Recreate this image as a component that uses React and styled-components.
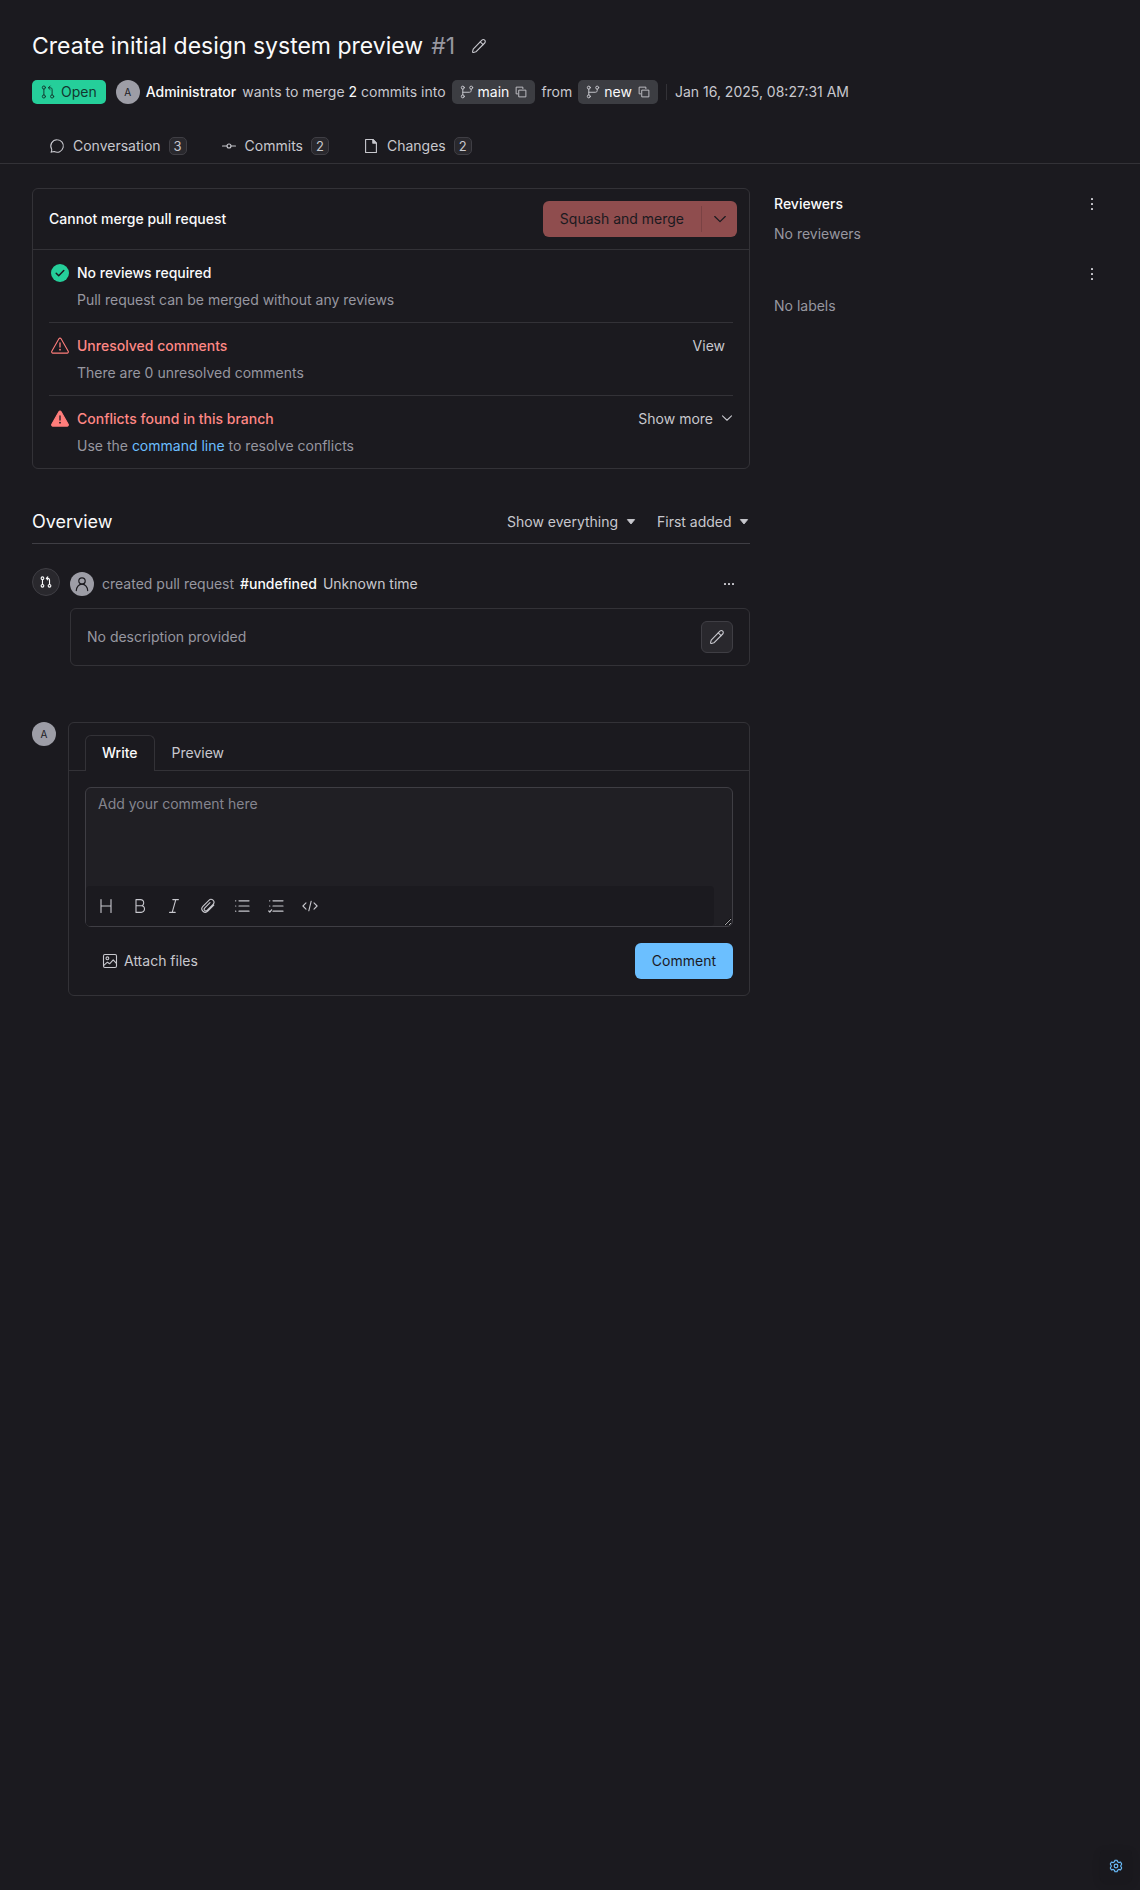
import React, { useState } from "react";
import styled, { createGlobalStyle, css } from "styled-components";

const c = {
  bg: "#1b1a1f",
  raised: "#201f24",
  control: "#29282d",
  chip: "#3c3d42",
  border: "#333237",
  borderStrong: "#3f3e44",
  text1: "#fafafb",
  text2: "#c8c8ce",
  text3: "#9797a0",
  muted: "#85858f",
  green: "#25cf9a",
  red: "#ff8885",
  redFill: "#ff7d7b",
  blue: "#6bbfff",
  avatar: "#9d9da6",
};

const GlobalStyle = createGlobalStyle`
  *, *::before, *::after { box-sizing: border-box; }
  body {
    margin: 0;
    background: ${c.bg};
    color: ${c.text2};
    font-family: Inter, "Liberation Sans", sans-serif;
    font-size: 14px;
    line-height: 20px;
  }
  h1, h2, h3, p { margin: 0; font-size: inherit; font-weight: inherit; }
  button, select, textarea { font: inherit; color: inherit; }
`;

/* ---------- icons ---------- */

const Svg = ({ size = 14, children, width, ...rest }) => (
  <svg
    width={size}
    height={size}
    viewBox="0 0 16 16"
    fill="none"
    stroke="currentColor"
    strokeWidth={width || 1.1}
    strokeLinecap="round"
    strokeLinejoin="round"
    aria-hidden="true"
    {...rest}
  >
    {children}
  </svg>
);

const PencilIcon = ({ size = 16 }) => (
  <Svg size={size}>
    <path d="M2.2 11.1 10.9 2.200a1.900 1.900 0 0 1 2.800 2.800L4.900 13.800l-2.400.7c-.6.1-1-.3-.9-.9z" />
    <path d="m9.300 3.900 2.800 2.800" />
  </Svg>
);
const PullRequestIcon = ({ size, width }) => (
  <Svg size={size} width={width}>
    <circle cx="3.3" cy="2.9" r="1.8" />
    <circle cx="3.3" cy="13.1" r="1.8" />
    <circle cx="12.7" cy="13.1" r="1.8" />
    <path d="M3.3 4.7v6.6M12.7 11.3V5.2c0-1.3-.7-2-2-2H8.6M10.4 1.2l-2 2 2 2" />
  </Svg>
);
const BranchIcon = () => (
  <Svg size={14}>
    <circle cx="3.2" cy="3" r="1.7" />
    <circle cx="3.2" cy="13" r="1.7" />
    <circle cx="12.8" cy="3" r="1.7" />
    <path d="M3.2 4.7v6.6M12.8 4.7v1.6c0 1.2-.8 2-2 2H3.2" />
  </Svg>
);
const CopyIcon = () => (
  <Svg size={12} width={1.2}>
    <path d="M5.5 5.5h9v9h-9zM3.5 10.5h-2v-9h9v2" />
  </Svg>
);
const BubbleIcon = () => (
  <Svg size={16}>
    <path d="M8.200 1.800a6.200 6.200 0 1 1-2.900 11.700c-.8-.2-1.900.6-3.200.7.5-1 .9-1.900.6-3A6.200 6.200 0 0 1 8.200 1.800z" />
  </Svg>
);
const CommitIcon = () => (
  <Svg size={16}>
    <circle cx="8" cy="8" r="2" />
    <path d="M1.5 8H6M10 8h4.5" />
  </Svg>
);
const FileIcon = () => (
  <Svg size={16}>
    <path d="M2.6 1.5h7.2l3.6 3.6v9.4H2.6z" />
    <path d="M9.8 1.5v3.6h3.6z" fill="currentColor" />
  </Svg>
);
const CheckCircleIcon = () => (
  <svg width="18" height="18" viewBox="0 0 18 18" aria-hidden="true">
    <circle cx="9" cy="9" r="9" fill={c.green} />
    <path d="m5.200 9.300 2.500 2.400L12.800 6.500" fill="none" stroke={c.bg} strokeWidth="1.5" strokeLinecap="round" strokeLinejoin="round" />
  </svg>
);
const WarningIcon = ({ solid }) => (
  <svg width="18" height="18" viewBox="0 0 18 18" fill="none" aria-hidden="true">
    <path
      d="M7.9 1.7a1.3 1.3 0 0 1 2.2 0l7.1 12.5a1.3 1.3 0 0 1-1.1 1.9H1.9a1.3 1.3 0 0 1-1.1-1.9z"
      fill={solid ? c.redFill : "none"}
      stroke={c.redFill}
      strokeWidth="1.1"
    />
    <path d="M9 6v4" stroke={solid ? c.bg : c.redFill} strokeWidth="1.3" strokeLinecap="round" />
    <circle cx="9" cy="12.7" r="0.9" fill={solid ? c.bg : c.redFill} />
  </svg>
);
const ChevronIcon = ({ size }) => (
  <Svg size={size} width={1.4}>
    <path d="M2 5.2 8 11l6-5.800" />
  </Svg>
);
const CaretIcon = () => (
  <svg width="10" height="6" viewBox="0 0 10 6" aria-hidden="true">
    <path d="M1.4.6h7.2L5 4.9z" fill="currentColor" stroke="currentColor" strokeLinejoin="round" />
  </svg>
);
const DotsIcon = ({ vertical }) => (
  <svg width="16" height="16" viewBox="0 0 16 16" fill="currentColor" aria-hidden="true">
    {vertical
      ? [3, 8, 13].map((y) => <rect key={y} x="7" y={y - 1} width="2" height="2" rx="0.5" />)
      : [4, 8, 12].map((x) => <rect key={x} x={x - 1} y="7" width="2" height="2" rx="0.5" />)}
  </svg>
);
const UserIcon = () => (
  <Svg size={16} width={1.2}>
    <circle cx="8" cy="5" r="3.2" />
    <path d="M2.3 14.6c0-3.6 2.5-6.4 5.7-6.4s5.7 2.8 5.7 6.4" />
  </Svg>
);
const HeaderIcon = () => <Svg size={16}><path d="M3 1.6v12.8M13 1.6v12.8M3 8h10" /></Svg>;
const BoldIcon = () => <Svg size={16}><path d="M4 1.6h4.6a3.1 3.1 0 0 1 0 6.2H4zM4 7.8h5.2a3.3 3.3 0 0 1 0 6.6H4z" /></Svg>;
const ItalicIcon = () => <Svg size={16}><path d="M6.8 1.6h5.6M3.6 14.4h5.6M9.8 1.6 6.2 14.4" /></Svg>;
const ClipIcon = () => (
  <Svg size={16}>
    <path d="m13.800 7.200-6 6a3.400 3.400 0 0 1-4.900-4.800l6-6.100a2.900 2.900 0 0 1 4.200 4l-6 6.100a1.700 1.700 0 0 1-2.500-2.300l5.400-5.500" />
  </Svg>
);
const ListIcon = () => (
  <Svg size={16}><path d="M5 2.8h10M5 8h10M5 13.2h10M1.6 2.8h.2M1.6 8h.2M1.6 13.2h.2" strokeWidth="1.2" /></Svg>
);
const ChecklistIcon = () => (
  <Svg size={16}><path d="M5 2.8h10M5 8h10M5 13.2h10M1.6 2.8h.2M1.6 8h.2M.8 13l1 1 1.8-2.2" strokeWidth="1.2" /></Svg>
);
const CodeIcon = () => <Svg size={16}><path d="M4 4.8.9 8 4 11.2M12 4.8 15.1 8 12 11.2M9.2 3.2 6.8 12.8" /></Svg>;
const ImageIcon = () => (
  <Svg size={16}>
    <rect x="1.5" y="1.5" width="13" height="13" rx="1.4" />
    <circle cx="5.4" cy="5.3" r="1.4" />
    <path d="m1.8 12.4 3.6-3.2 2.2 1.6 3.6-4 3.2 3.6" />
  </Svg>
);
const GearIcon = () => (
  <Svg size={14} width={1.3}>
    <path d="M6.8 1.4h2.4l.5 1.8 1.5.9 2-.6 1.3 2.3L13.3 8l1.2 2.2-1.3 2.3-2-.6-1.5.9-.5 1.8H6.8l-.5-1.8-1.5-.9-2 .6-1.3-2.3L2.7 8 1.5 5.8l1.3-2.3 2 .6 1.5-.9z" />
    <circle cx="8" cy="8" r="2.1" />
  </Svg>
);

/* ---------- shared parts ---------- */

const PlainButton = styled.button`
  display: inline-flex;
  align-items: center;
  justify-content: center;
  gap: 8px;
  padding: 0;
  border: 0;
  background: none;
  color: ${c.text2};
  cursor: pointer;
`;

const IconButton = styled(PlainButton)`
  width: ${(p) => p.$size || 24}px;
  height: ${(p) => p.$size || 24}px;
  flex: none;
  ${(p) =>
    p.$outlined &&
    css`
      background: ${c.control};
      border: 1px solid ${c.borderStrong};
      border-radius: 6px;
    `}
`;

const Avatar = styled.span`
  display: flex;
  align-items: center;
  justify-content: center;
  flex: none;
  width: 24px;
  height: 24px;
  border-radius: 50%;
  background: ${c.avatar};
  color: ${c.bg};
  font-size: 10px;
`;

const Strong = styled.strong`
  color: ${c.text1};
  font-weight: ${(p) => p.$weight || 500};
`;

const Card = styled.section`
  border: 1px solid ${c.border};
  border-radius: 6px;
`;

/* ---------- page ---------- */

const Page = styled.div`
  padding-top: 30px;
`;

const Header = styled.header`
  display: flex;
  flex-direction: column;
  gap: 18px;
  padding: 0 32px;
`;

const TitleRow = styled.div`
  display: flex;
  align-items: center;
  gap: 8px;
`;

const Title = styled.h1`
  color: ${c.text1};
  font-size: 23px;
  line-height: 32px;
  font-weight: 400;
`;

const TitleNumber = styled.span`
  color: ${c.text3};
  font-size: 23px;
  line-height: 32px;
`;

const Meta = styled.div`
  display: flex;
  align-items: center;
  flex-wrap: wrap;
  gap: 6px;
`;

const StateBadge = styled.span`
  display: inline-flex;
  align-items: center;
  gap: 6px;
  height: 24px;
  margin-right: 4px;
  padding: 0 9px;
  border-radius: 5px;
  background: ${c.green};
  color: #12382f;
`;

const BranchChip = styled.span`
  display: inline-flex;
  align-items: center;
  gap: 4px;
  height: 24px;
  padding: 0 8px;
  border-radius: 5px;
  background: ${c.chip};
`;

const BranchLink = styled.a`
  display: inline-flex;
  align-items: center;
  gap: 4px;
  color: ${c.text1};
  text-decoration: none;
  svg { color: ${c.text2}; }
`;

const CopyButton = styled(PlainButton)`
  width: 12px;
  height: 14px;
  margin-left: 2px;
`;

const Divider = styled.span`
  width: 1px;
  height: 16px;
  margin: 0 2px;
  background: ${c.border};
`;

const Tabs = styled.nav`
  display: flex;
  margin-top: 24px;
  padding: 0 32px;
  border-bottom: 1px solid ${c.border};
`;

const Tab = styled.a`
  display: flex;
  align-items: center;
  gap: 8px;
  height: 35px;
  padding: 0 17px;
  color: ${c.text2};
  text-decoration: none;
`;

const Count = styled.span`
  min-width: 18px;
  height: 18px;
  border: 1px solid ${c.borderStrong};
  border-radius: 5px;
  background: ${c.control};
  font-size: 13px;
  line-height: 16px;
  text-align: center;
`;

const Columns = styled.div`
  display: grid;
  grid-template-columns: minmax(0, 1fr) 334px;
  gap: 24px;
  padding: 24px 32px;
`;

/* ---------- merge panel ---------- */

const MergeHeader = styled.div`
  display: flex;
  align-items: center;
  justify-content: space-between;
  padding: 12px 12px 12px 16px;
  border-bottom: 1px solid ${c.border};
`;

const SplitButton = styled.div`
  display: flex;
  align-items: center;
  height: 36px;
  border-radius: 6px;
  background: #8f4d4e;
  button {
    height: 36px;
    color: ${c.bg};
  }
`;

const SplitMain = styled(PlainButton)`
  padding: 0 17px;
`;

const SplitMenu = styled(PlainButton)`
  width: 35px;
`;

const SplitRule = styled.span`
  width: 1px;
  height: 26px;
  background: #7a4244;
`;

const Checks = styled.ul`
  margin: 0;
  padding: 0 16px;
  list-style: none;
`;

const Check = styled.li`
  display: grid;
  grid-template-columns: 18px 1fr auto;
  align-items: center;
  gap: 6px 8px;
  padding: 12px 0 12px 2px;
  line-height: 21px;
  & + & { border-top: 1px solid ${c.border}; }
`;

const CheckTitle = styled.h3`
  color: ${(p) => (p.$tone === "danger" ? c.red : c.text1)};
  font-weight: 500;
`;

const CheckText = styled.p`
  grid-column: 2 / -1;
  color: ${c.text3};
`;

const TextLink = styled.a`
  color: ${c.blue};
  text-decoration: none;
`;

const CheckAction = styled(PlainButton)`
  align-self: start;
  height: 20px;
  padding: 0 ${(p) => (p.$icon ? 0 : 8)}px 0 0;
`;

/* ---------- overview ---------- */

const Overview = styled.div`
  display: flex;
  align-items: center;
  justify-content: space-between;
  margin-top: 40px;
  padding-bottom: 8px;
  border-bottom: 1px solid ${c.borderStrong};
`;

const OverviewTitle = styled.h2`
  color: ${c.text1};
  font-size: 18px;
  line-height: 26px;
  font-weight: 400;
`;

const Filters = styled.div`
  display: flex;
  gap: 20px;
`;

const SelectWrap = styled.label`
  display: grid;
  align-items: center;
  & > * { grid-area: 1 / 1; }
  svg { justify-self: end; pointer-events: none; margin-right: 1px; }
`;

const Select = styled.select`
  appearance: none;
  padding: 0 18px 0 0;
  border: 0;
  background: ${c.bg};
  cursor: pointer;
`;

const Event = styled.article`
  display: grid;
  grid-template-columns: 28px minmax(0, 1fr);
  gap: 10px;
  margin-top: 24px;
`;

const EventMarker = styled.span`
  display: flex;
  align-items: center;
  justify-content: center;
  width: 28px;
  height: 28px;
  border: 1px solid ${c.borderStrong};
  border-radius: 50%;
  background: ${c.control};
  color: ${c.text1};
`;

const EventLine = styled.div`
  display: flex;
  align-items: center;
  gap: 6px;
  padding: 4px 9px 12px 0;
  span + p { margin-left: 2px; }
`;

const EventAction = styled.p`
  color: ${c.text3};
`;

const Spacer = styled.span`
  flex: 1;
`;

const Description = styled(Card)`
  display: flex;
  align-items: center;
  justify-content: space-between;
  padding: 12px 16px;
  color: ${c.text3};
`;

/* ---------- comment form ---------- */

const Composer = styled.div`
  display: grid;
  grid-template-columns: 24px minmax(0, 1fr);
  gap: 12px;
  margin-top: 56px;
`;

const ComposerTabs = styled.div`
  display: flex;
  padding: 12px 16px 0;
  border-bottom: 1px solid ${c.border};
`;

const ComposerTab = styled(PlainButton)`
  height: 36px;
  margin-bottom: -1px;
  padding: 0 16px 2px;
  border: 1px solid transparent;
  border-bottom: 0;
  border-radius: 6px 6px 0 0;
  ${(p) =>
    p.$active &&
    css`
      border-color: ${c.border};
      background: ${c.bg};
      color: ${c.text1};
      font-weight: 500;
    `}
`;

const ComposerBody = styled.form`
  padding: 16px;
`;

const Editor = styled.div`
  position: relative;
  display: flex;
`;

const Textarea = styled.textarea`
  width: 100%;
  height: 140px;
  min-height: 140px;
  padding: 6px 12px 44px;
  border: 1px solid ${c.borderStrong};
  border-radius: 6px;
  background: ${c.raised};
  resize: vertical;
  outline: none;
  color-scheme: dark;
  &::placeholder { color: ${c.muted}; }
`;

const Toolbar = styled.div`
  position: absolute;
  left: 1px;
  right: 19px;
  bottom: 1px;
  display: flex;
  align-items: center;
  gap: 10px;
  height: 40px;
  padding: 0 8px;
  border-radius: 4px;
  background: ${c.bg};
`;

const ComposerFooter = styled.div`
  display: flex;
  align-items: center;
  justify-content: space-between;
  margin-top: 16px;
`;

const AttachButton = styled(PlainButton)`
  gap: 6px;
  height: 36px;
  padding: 0 17px;
`;

const SubmitButton = styled(PlainButton)`
  height: 36px;
  padding: 0 17px;
  border-radius: 6px;
  background: ${c.blue};
  color: ${c.bg};
`;

/* ---------- aside ---------- */

const Aside = styled.aside`
  display: flex;
  flex-direction: column;
  gap: 18px;
  padding-top: 4px;
`;

const AsideGroup = styled.section`
  display: flex;
  flex-direction: column;
  gap: ${(p) => p.$gap}px;
  color: ${c.text3};
`;

const AsideHead = styled.div`
  display: flex;
  align-items: center;
  justify-content: space-between;
  padding-right: 4px;
`;

const SettingsButton = styled(IconButton)`
  position: fixed;
  right: 8px;
  bottom: 8px;
  border-radius: 4px;
  background: #19181d;
  color: ${c.blue};
  box-shadow: 0 2px 8px rgba(0, 0, 0, 0.1);
`;

const pageTabs = [
  { label: "Conversation", count: 3, Icon: BubbleIcon },
  { label: "Commits", count: 2, Icon: CommitIcon },
  { label: "Changes", count: 2, Icon: FileIcon },
];

const tools = [
  ["Heading", HeaderIcon],
  ["Bold", BoldIcon],
  ["Italic", ItalicIcon],
  ["Attachment", ClipIcon],
  ["List", ListIcon],
  ["Checklist", ChecklistIcon],
  ["Code", CodeIcon],
];

const Branch = ({ name }) => (
  <BranchChip>
    <BranchLink href={`#${name}`}>
      <BranchIcon />
      {name}
    </BranchLink>
    <CopyButton type="button" aria-label={`Copy ${name}`}>
      <CopyIcon />
    </CopyButton>
  </BranchChip>
);

const Filter = ({ label, options }) => (
  <SelectWrap>
    <Select aria-label={label}>
      {options.map((o) => (
        <option key={o}>{o}</option>
      ))}
    </Select>
    <CaretIcon />
  </SelectWrap>
);

export default function App() {
  const [mode, setMode] = useState("Write");

  return (
    <Page>
      <GlobalStyle />
      <Header>
        <TitleRow>
          <Title>Create initial design system preview</Title>
          <TitleNumber>#1</TitleNumber>
          <IconButton type="button" $size={32} aria-label="Edit title">
            <PencilIcon />
          </IconButton>
        </TitleRow>
        <Meta>
          <StateBadge>
            <PullRequestIcon size={14} />
            Open
          </StateBadge>
          <Avatar>A</Avatar>
          <Strong>Administrator</Strong>
          <span>
            wants to merge <Strong $weight={400}>2</Strong> commits into
          </span>
          <Branch name="main" />
          <span>from</span>
          <Branch name="new" />
          <Divider />
          <time>Jan 16, 2025, 08:27:31 AM</time>
        </Meta>
      </Header>

      <Tabs>
        {pageTabs.map(({ label, count, Icon }) => (
          <Tab key={label} href={`#${label.toLowerCase()}`}>
            <Icon />
            {label}
            <Count>{count}</Count>
          </Tab>
        ))}
      </Tabs>

      <Columns>
        <main>
          <Card>
            <MergeHeader>
              <Strong>Cannot merge pull request</Strong>
              <SplitButton>
                <SplitMain type="button">Squash and merge</SplitMain>
                <SplitRule />
                <SplitMenu type="button" aria-label="Merge options">
                  <ChevronIcon size={14} />
                </SplitMenu>
              </SplitButton>
            </MergeHeader>
            <Checks>
              <Check>
                <CheckCircleIcon />
                <CheckTitle>No reviews required</CheckTitle>
                <CheckText>Pull request can be merged without any reviews</CheckText>
              </Check>
              <Check>
                <WarningIcon />
                <CheckTitle $tone="danger">Unresolved comments</CheckTitle>
                <CheckAction type="button">View</CheckAction>
                <CheckText>There are 0 unresolved comments</CheckText>
              </Check>
              <Check>
                <WarningIcon solid />
                <CheckTitle $tone="danger">Conflicts found in this branch</CheckTitle>
                <CheckAction type="button" $icon>
                  Show more
                  <ChevronIcon size={12} />
                </CheckAction>
                <CheckText>
                  Use the <TextLink href="#command-line">command line</TextLink> to resolve conflicts
                </CheckText>
              </Check>
            </Checks>
          </Card>

          <Overview>
            <OverviewTitle>Overview</OverviewTitle>
            <Filters>
              <Filter label="Activity" options={["Show everything"]} />
              <Filter label="Order" options={["First added"]} />
            </Filters>
          </Overview>

          <Event>
            <EventMarker>
              <PullRequestIcon size={12} width={1.5} />
            </EventMarker>
            <div>
              <EventLine>
                <Avatar>
                  <UserIcon />
                </Avatar>
                <EventAction>created pull request</EventAction>
                <Strong>#undefined</Strong>
                <time>Unknown time</time>
                <Spacer />
                <IconButton type="button" aria-label="More actions">
                  <DotsIcon />
                </IconButton>
              </EventLine>
              <Description>
                <p>No description provided</p>
                <IconButton type="button" $size={32} $outlined aria-label="Edit description">
                  <PencilIcon />
                </IconButton>
              </Description>
            </div>
          </Event>

          <Composer>
            <Avatar>A</Avatar>
            <Card>
              <ComposerTabs role="tablist">
                {["Write", "Preview"].map((name) => (
                  <ComposerTab
                    key={name}
                    type="button"
                    role="tab"
                    aria-selected={mode === name}
                    $active={mode === name}
                    onClick={() => setMode(name)}
                  >
                    {name}
                  </ComposerTab>
                ))}
              </ComposerTabs>
              <ComposerBody onSubmit={(e) => e.preventDefault()}>
                <Editor>
                  <Textarea aria-label="Comment" placeholder="Add your comment here" />
                  <Toolbar>
                    {tools.map(([name, Icon]) => (
                      <IconButton key={name} type="button" aria-label={name}>
                        <Icon />
                      </IconButton>
                    ))}
                  </Toolbar>
                </Editor>
                <ComposerFooter>
                  <AttachButton type="button">
                    <ImageIcon />
                    Attach files
                  </AttachButton>
                  <SubmitButton type="submit">Comment</SubmitButton>
                </ComposerFooter>
              </ComposerBody>
            </Card>
          </Composer>
        </main>

        <Aside>
          <AsideGroup $gap={8}>
            <AsideHead>
              <Strong>Reviewers</Strong>
              <IconButton type="button" aria-label="Edit reviewers">
                <DotsIcon vertical />
              </IconButton>
            </AsideHead>
            <p>No reviewers</p>
          </AsideGroup>
          <AsideGroup $gap={10}>
            <AsideHead>
              <span />
              <IconButton type="button" aria-label="Edit labels">
                <DotsIcon vertical />
              </IconButton>
            </AsideHead>
            <p>No labels</p>
          </AsideGroup>
        </Aside>
      </Columns>

      <SettingsButton type="button" $size={32} aria-label="Settings">
        <GearIcon />
      </SettingsButton>
    </Page>
  );
}
